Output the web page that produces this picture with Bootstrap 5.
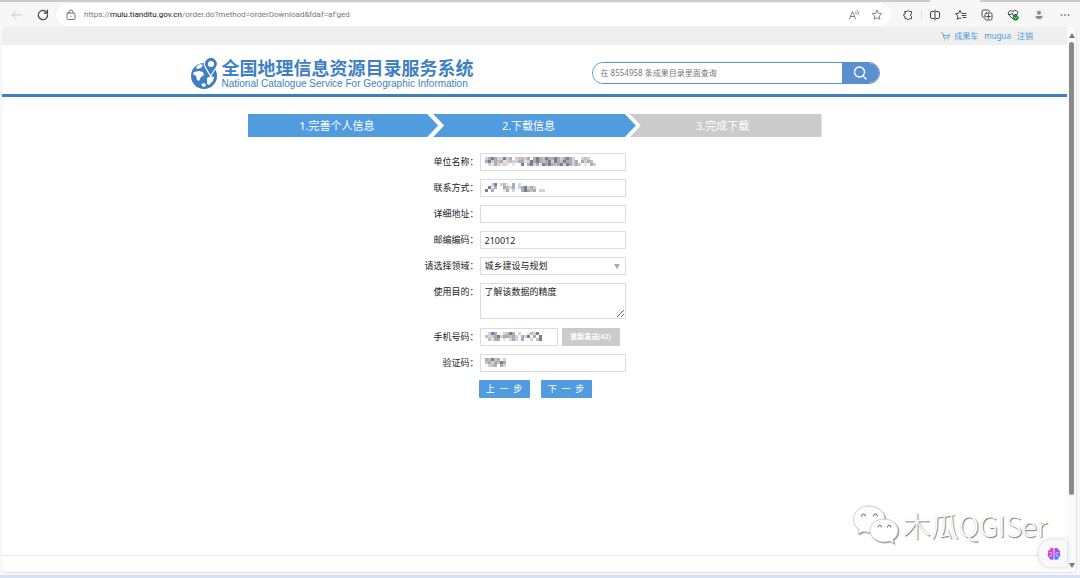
<!DOCTYPE html>
<html lang="zh-CN">
<head>
<meta charset="utf-8">
<meta name="viewport" content="width=device-width, initial-scale=1">
<title>全国地理信息资源目录服务系统</title>
<link href="https://cdn.jsdelivr.net/npm/bootstrap@5.3.0/dist/css/bootstrap.min.css" rel="stylesheet">
<style>
  :root { --brand:#3f7fc4; --step:#509cdf; --idle:#cbcbcb; }
  body { font-family:"Noto Sans","Noto Sans CJK SC",sans-serif; font-size:9px; line-height:12px; color:#222; background:#f7f7f7; }
  svg { display:block; fill:none; stroke-linecap:round; stroke-linejoin:round; }
  a { text-decoration:none; }
  button { font-family:inherit; }
  .tabstrip { height:2px; background:var(--idle); padding-right:100px; }
  .tab-on { width:50px; background:#f7f7f7; }
  .toolbar { height:25px; color:#444; }
  .toolbar button { width:26px; height:25px; background:none; border:0; padding:0; color:inherit; display:flex; align-items:center; justify-content:center; }
  .toolbar button.faint { color:#ccc; }
  .toolbar svg { stroke:currentColor; }
  .omni { height:23px; border-radius:12px; background:#fff; font-family:Roboto,"Noto Sans",sans-serif; font-size:8px; color:#777; padding-left:10px; box-shadow:0 0 2px #e4e4e4; }
  .omni b { font-weight:400; color:#111; }
  .toolbar .omni .tool { color:#777; width:23px; }
  .sep { width:1px; height:10px; background:#ddd; }
  .tools { padding:0 2px 0 3px; }
  .frame { margin:0 3px 0 2px; background:#fff; border:1px solid #e2e2e2; border-width:0 1px 1px 0; border-radius:5px; overflow:hidden; }
  .topbar { height:18px; background:#efefef; padding-right:34px; gap:6px; font-size:8px; }
  .topbar a { color:#4a9ad8; }
  .masthead { border-bottom:3px solid var(--brand); height:52px; }
  .head-in { max-width:690px; padding-top:7px; }
  .brand-text { color:var(--brand); }
  .brand-text h1 { font-size:18px; line-height:22px; font-weight:700; margin:0; }
  .brand-text p { font-family:"Liberation Sans",sans-serif; font-size:10px; line-height:10px; margin:0; }
  .finder { width:288px; height:22px; border:1px solid #5b90ce; border-radius:11px; overflow:hidden; background:#fff; }
  .finder input { border:0; outline:0; min-width:0; font-size:8px; padding:0 8px; color:#777; }
  .finder input::placeholder { color:#777; opacity:1; }
  .finder button { width:37px; border:0; padding:0; background:#5b90ce; color:#fff; }
  .wizard { width:574px; margin-top:17px; }
  .wizard ol { height:23px; margin:0 0 16px; }
  .wizard li { width:191px; padding-right:12px; background:var(--step); color:#fff; font-size:11px; clip-path:polygon(0 0,calc(100% - 11px) 0,100% 50%,calc(100% - 11px) 100%,0 100%); }
  .wizard li + li { width:203px; margin-left:-5px; clip-path:polygon(0 0,calc(100% - 11px) 0,100% 50%,calc(100% - 11px) 100%,0 100%,11px 50%); }
  .wizard li.idle { width:192px; margin-left:-6px; padding-right:6px; background:var(--idle); clip-path:polygon(0 0,100% 0,100% 100%,0 100%,11px 50%); }
  .fields { display:grid; grid-template-columns:231px 146px; column-gap:1px; row-gap:8px; }
  .fields label { text-align:right; line-height:18px; }
  .box { display:block; width:100%; height:18px; border:1px solid #dcdcdc; border-radius:0; background:#fff; padding:0 4px; font-size:9px; line-height:14px; color:#222; outline:0; }
  select.box { appearance:none; }
  textarea.box { height:36px; padding-top:1px; resize:vertical; margin-bottom:1px; }
  .caret { right:6px; top:7px; border:3px solid transparent; border-top:5px solid #aaa; border-bottom:0; }
  .mosaic { left:5px; top:4px; opacity:.8; }
  .phone { width:78px; }
  .resend { width:58px; height:18px; border:0; padding:0; background:var(--idle); color:#fff; font-size:7px; font-weight:600; }
  .go { width:51px; height:18px; border:0; border-radius:1px; padding:0; background:var(--step); color:#fff; font-size:9px; line-height:18px; }
  .nav-row { margin-left:-1px; gap:11px; }
  .foot { height:17px; border-top:1px solid #e6e6e6; }
  .rail { width:9px; background:#fbfbfb; padding:6px 2px 4px; }
  .rail .up, .rail .down { border:3px solid transparent; border-top:0; border-bottom:5px solid #777; width:0; margin:0 auto; }
  .rail .down { border-top:5px solid #777; border-bottom:0; }
  .thumb { height:87%; background:#8a8a8a; border-radius:3px; }
  .stamp { right:21px; bottom:26px; gap:3px; font-family:"Noto Sans CJK SC",sans-serif; font-size:28px; line-height:36px; font-weight:300; color:#fff; text-shadow:1px 1px 1px #777, 0 0 1px #ccc; white-space:nowrap; }
  .stamp svg { filter:drop-shadow(1px 1px 0 #999); }
  .brain { right:9px; bottom:5px; width:28px; height:27px; border:0; padding:0 0 0 8px; border-radius:12px 0 0 12px; background:#f9f9fb; box-shadow:0 0 5px #ccc; }
  .taskline { height:3px; margin-top:2px; background:#d5e1f0; }
</style>
</head>
<body class="d-flex flex-column vh-100 overflow-hidden">
<div class="tabstrip d-flex justify-content-end"><span class="tab-on"></span></div>
<header class="toolbar d-flex align-items-center">
  <div class="d-flex ps-1">
    <button type="button" class="faint" aria-label="后退"><svg width="12" height="12" viewBox="0 0 12 12"><path d="M11 6H1M5 2L1 6l4 4"/></svg></button>
    <button type="button" aria-label="刷新"><svg width="12" height="12" viewBox="0 0 12 12" stroke-width="1.2"><path d="M10.500 5.500A4.600 4.600 0 1 1 8.600 2.300L10.300 4M10.500 1v3.200H7.300"/></svg></button>
  </div>
  <div class="omni flex-grow-1 d-flex align-items-center">
    <svg class="me-2" width="10" height="12" viewBox="0 0 10 12"><rect x="1" y="4" width="8" height="6.500" rx="1"/><path d="M3 4V3a2 2 0 0 1 4 0v1M5 7v.5"/></svg>
    <span class="flex-grow-1">https://<b>mulu.tianditu.gov.cn</b>/order.do?method=orderDownload&amp;fdaf=af'ged</span>
    <button class="tool" type="button" aria-label="大声朗读"><svg width="12" height="12" viewBox="0 0 12 12" stroke-width=".9"><path d="M1.500 10L4.500 2.500 7.500 10M2.500 7.500h4M7.500 3q1 .8.800 2M9 1.500q2 1.300 1.500 3.500"/></svg></button>
    <button class="tool me-1" type="button" aria-label="收藏"><svg width="12" height="12" viewBox="0 0 12 12" stroke-width=".9"><path d="M6 1.300l1.400 3 3.300.4-2.400 2.300.6 3.300L6 8.700l-2.900 1.600.6-3.300L1.300 4.700l3.300-.4z"/></svg></button>
  </div>
  <div class="tools d-flex align-items-center">
    <button type="button" aria-label="扩展"><svg width="12" height="12" viewBox="0 0 12 12"><path d="M3 2.500h2a1.300 1.300 0 0 1 2.400 0H9.500v2.200a1.400 1.400 0 0 0 0 2.700v2.300H7.400a1.300 1.300 0 0 1-2.500 0H3V7.500a1.400 1.400 0 0 1 0-2.800z"/></svg></button>
    <span class="sep"></span>
    <button type="button" aria-label="分屏"><svg width="12" height="12" viewBox="0 0 12 12"><path d="M5 2.500H3a1.500 1.500 0 0 0-1.500 1.500v4A1.500 1.500 0 0 0 3 9.500h2M7 2.500h2A1.500 1.500 0 0 1 10.500 4v4A1.500 1.500 0 0 1 9 9.500H7M6 1v10"/></svg></button>
    <button type="button" aria-label="收藏夹"><svg width="12" height="12" viewBox="0 0 12 12"><path d="M7.500 4.300L6.300 4 5 1.300l-1.400 3-3 .4L2.800 7l-.5 3.300L5 8.800l1 .5M8 4.500h3M7 6.500h4M8 8.500h3"/></svg></button>
    <button type="button" aria-label="集锦"><svg width="12" height="12" viewBox="0 0 12 12"><rect x="4" y="4" width="7" height="7" rx="1.500"/><path d="M7.500 5.700v3.600M5.700 7.500h3.600M2.500 8.500A2 2 0 0 1 1 6.500V3a2 2 0 0 1 2-2h3.500a2 2 0 0 1 2 1.500"/></svg></button>
    <button type="button" aria-label="浏览器概要"><svg width="12" height="12" viewBox="0 0 12 12"><path d="M6 10L1.800 6A2.500 2.500 0 0 1 6 2.700 2.500 2.500 0 0 1 10.500 5M2 5.500h2l1-1.500 1.500 3 1-1.500h2"/><circle cx="8.700" cy="8.700" r="2.500" fill="#178a2e" stroke="#178a2e"/><path d="M7.600 8.700l.8.800 1.400-1.600" stroke="#fff" stroke-width=".7"/></svg></button>
    <button type="button" aria-label="个人资料"><svg width="14" height="14" viewBox="0 0 14 14"><circle cx="7" cy="7" r="6.500" fill="#f1f1f1" stroke="none"/><circle cx="7" cy="4.700" r="2" fill="#888" stroke="none"/><path d="M3.700 8h6.600v.8c0 2.900-6.600 2.900-6.600 0z" fill="#888" stroke="none"/></svg></button>
    <button type="button" aria-label="更多"><svg width="12" height="12" viewBox="0 0 12 12" stroke-width="1.600"><path d="M2.500 6h0M6 6h0M9.500 6h0"/></svg></button>
  </div>
</header>

<div class="frame flex-grow-1 d-flex position-relative">
  <div class="flex-grow-1 d-flex flex-column">
    <nav class="topbar d-flex justify-content-end align-items-center">
      <a href="#" class="d-flex align-items-center"><svg class="me-1" width="9" height="9" viewBox="0 0 9 9" stroke="currentColor" stroke-width=".8"><path d="M.500 1h1.200L3 6h4.500l1-4M2.500 3.500h5.300M3.500 8h0M7 8h0"/></svg>成果车</a>
      <a href="#">mugua</a>
      <a href="#">注销</a>
    </nav>
    <div class="masthead d-flex">
      <div class="head-in container-fluid px-0 d-flex align-items-center justify-content-between">
        <div class="d-flex align-items-center">
          <svg class="me-1" width="28" height="32" viewBox="0 0 28 32">
            <circle cx="14" cy="19" r="13" fill="#3f7fc4"/>
            <path d="M4 15l5-1 4 1 1 3-3 2-2 4-2-1-1-4-3-2zM17 21l4-2 3 1-1 4-4 4-2-1zM6 10l4-3 3 1-2 3-4 1zM11 27l4-1 1 3-3 1z" fill="#fff"/>
            <path d="M20.500 19l-5-8.500A6.500 6.500 0 1 1 26.600 10z" fill="#3f7fc4" stroke="#fff" stroke-width="1.300"/>
            <circle cx="21" cy="7" r="3" fill="#fff"/>
          </svg>
          <div class="brand-text">
            <h1>全国地理信息资源目录服务系统</h1>
            <p>National Catalogue Service For Geographic Information</p>
          </div>
        </div>
        <form class="finder d-flex" role="search">
          <input class="flex-grow-1" type="search" aria-label="查询" placeholder="在 8554958 条成果目录里面查询">
          <button type="button" aria-label="搜索"><svg class="mx-auto" width="16" height="16" viewBox="0 0 16 16" stroke="#fff" stroke-width="1.400"><circle cx="7.500" cy="7" r="5"/><path d="M11 11l3 3"/></svg></button>
        </form>
      </div>
    </div>

    <main class="wizard mx-auto flex-grow-1">
      <ol class="list-unstyled d-flex">
        <li class="d-flex align-items-center justify-content-center">1.完善个人信息</li>
        <li class="d-flex align-items-center justify-content-center">2.下载信息</li>
        <li class="idle d-flex align-items-center justify-content-center">3.完成下载</li>
      </ol>
      <form class="fields">
        <label for="org">单位名称：</label>
        <div class="position-relative"><input id="org" class="box" type="text"><svg class="mosaic position-absolute" data-rows="abcbaacab.addab.bcbdcbbcbabcba..ada..|bcabdbfadaabbfacbcbdbcacbdcbbab.babd.|.afbafaf.f..c.bcabfcbcbdbcacbaba.f.ba"></svg></div>
        <label for="contact">联系方式：</label>
        <div class="position-relative"><input id="contact" class="box" type="text"><svg class="mosaic position-absolute" data-rows="..ec.adf.b.e........|.cfb..bdeb.abcaba...|c.b...fb.e..bcbdb.ae"></svg></div>
        <label for="address">详细地址：</label>
        <input id="address" class="box" type="text">
        <label for="zip">邮编编码：</label>
        <input id="zip" class="box" type="text" value="210012">
        <label for="area">请选择领域：</label>
        <div class="position-relative"><select id="area" class="box"><option>城乡建设与规划</option></select><span class="caret position-absolute"></span></div>
        <label for="aim">使用目的：</label>
        <textarea id="aim" class="box">了解该数据的精度</textarea>
        <label for="phone">手机号码：</label>
        <div class="d-flex gap-1">
          <div class="phone position-relative"><input id="phone" class="box" type="text"><svg class="mosaic position-absolute" data-rows=".ecb..adcb.e..fdac.|deabcabbdba.bac.b.c|.dfbb.f.eba.b..e.dc"></svg></div>
          <button type="button" class="resend">重新发送(42)</button>
        </div>
        <label for="code">验证码：</label>
        <div class="position-relative"><input id="code" class="box" type="text"><svg class="mosaic position-absolute" data-rows="bdcdb.a|dbabdcb|.adb.be"></svg></div>
        <span></span>
        <div class="nav-row d-flex"><button type="button" class="go">上&nbsp; 一&nbsp; 步</button><button type="button" class="go">下&nbsp; 一&nbsp; 步</button></div>
      </form>
    </main>
    <footer class="foot"></footer>
  </div>
  <div class="rail d-flex flex-column">
    <span class="up mb-1"></span>
    <div class="flex-grow-1"><div class="thumb"></div></div>
    <span class="down"></span>
  </div>
  <div class="stamp position-absolute d-flex align-items-center pe-2">
    <svg width="48" height="42" viewBox="0 0 48 42" stroke="#bbb" stroke-width=".7">
      <path d="M17 2C8 2 1.500 8 1.500 15.500c0 4 2 7.500 5.500 10L6 30l5-2.500c2 .6 4 .8 7 .8 8 0 15-5 15-12.800S26 2 17 2z" fill="#fff"/>
      <path d="M32 15c-8 0-14 5-14 11.500S24 38 32 38c2 0 4-.3 6-1l4 2.500-1-4c3-2 5-5 5-9C46 20 40 15 32 15z" fill="#fff"/>
      <path d="M9.500 12a2 2 0 0 1 4 0M21.500 12a2 2 0 0 1 4 0M26 23a1.700 1.700 0 0 1 3.400 0M35.500 23a1.700 1.700 0 0 1 3.400 0" stroke="#666" stroke-width="1"/>
    </svg>
    <span>木瓜QGISer</span>
  </div>
  <button type="button" class="brain position-absolute" aria-label="助手"><svg width="14" height="14" viewBox="0 0 14 14">
    <defs><linearGradient id="lobes" x1="0" y1="0" x2="1" y2="1"><stop offset="0" stop-color="#ff5a6e"/><stop offset=".45" stop-color="#b445f0"/><stop offset="1" stop-color="#2fa0ff"/></linearGradient></defs>
    <path d="M6.600 1.500C5 0 3 1 2.700 2.700 1 3 .500 5 1.200 6.300 0 7.500.500 9.800 2.200 10.300 2.500 12.800 5 13.500 6.600 12.300zM7.400 1.500C9 0 11 1 11.300 2.700 13 3 13.500 5 12.800 6.300 14 7.500 13.500 9.800 11.800 10.300 11.500 12.800 9 13.500 7.400 12.300z" fill="url(#lobes)"/>
    <path d="M3 5.500q1.500-.5 2 1M3 9q1.500.5 2-1M11 5.500q-1.500-.5-2 1M11 9q-1.500.5-2-1" stroke="#fff" stroke-width=".8"/></svg></button>
</div>
<div class="taskline"></div>
<script src="https://cdn.jsdelivr.net/npm/bootstrap@5.3.0/dist/js/bootstrap.bundle.min.js"></script>
<script>
  // Paint the privacy mosaics: one letter per 3px cell.
  const tones = {a:'#c6c6d4', b:'#9498a8', c:'#5c5f6b', d:'#c9ab98', e:'#b4d2ec', f:'#e6e1de'};
  document.querySelectorAll('.mosaic').forEach(svg => {
    const rows = svg.dataset.rows.split('|');
    svg.setAttribute('width', rows[0].length * 3);
    svg.setAttribute('height', rows.length * 3);
    svg.innerHTML = rows.map((row, y) => [...row].map((k, x) =>
      tones[k] ? `<rect x="${x * 3}" y="${y * 3}" width="3" height="3" fill="${tones[k]}"/>` : '').join('')).join('');
  });
</script>
</body>
</html>
